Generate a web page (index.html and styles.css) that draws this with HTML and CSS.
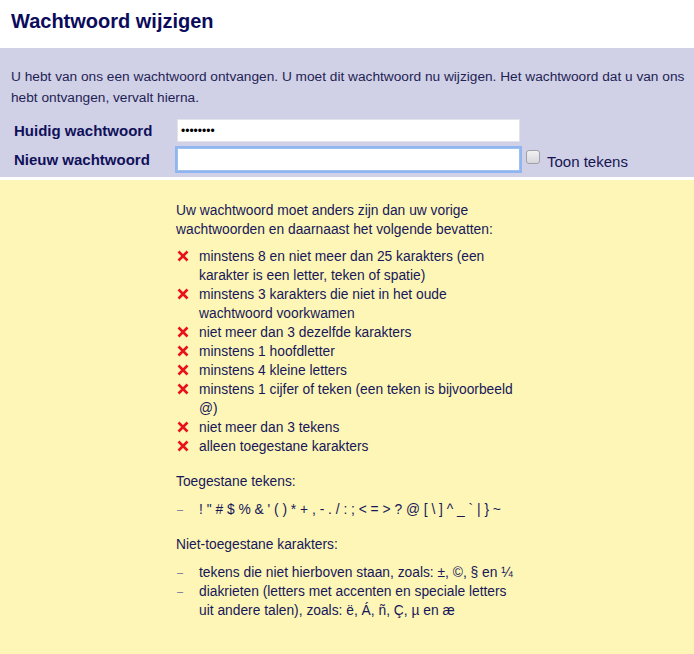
FILE: index.html
```html
<!DOCTYPE html>
<html lang="nl">
<head>
<meta charset="utf-8">
<title>Wachtwoord wijzigen</title>
<link rel="stylesheet" href="styles.css">
</head>
<body>
<header class="page-head">
  <h1 class="title">Wachtwoord wijzigen</h1>
</header>
<section class="band">
  <p class="intro">U hebt van ons een wachtwoord ontvangen. U moet dit wachtwoord nu wijzigen. Het wachtwoord dat u van ons hebt ontvangen, vervalt hierna.</p>
  <div class="form">
    <label class="label" for="cur">Huidig wachtwoord</label>
    <input class="field" id="cur" type="password" value="12345678">
    <span></span>
    <label class="label" for="new">Nieuw wachtwoord</label>
    <input class="field focus" id="new" type="password">
    <span class="show"><span class="check"></span>Toon tekens</span>
  </div>
</section>
<section class="rules">
  <div class="rules-inner">
    <p class="lead">Uw wachtwoord moet anders zijn dan uw vorige wachtwoorden en daarnaast het volgende bevatten:</p>
    <ul class="list">
      <li class="item"><svg class="x" viewBox="0 0 12 12"><path d="M1.5 1.5 L10.5 10.5 M10.5 1.5 L1.5 10.5"/></svg>minstens 8 en niet meer dan 25 karakters (een karakter is een letter, teken of spatie)</li>
      <li class="item"><svg class="x" viewBox="0 0 12 12"><path d="M1.5 1.5 L10.5 10.5 M10.5 1.5 L1.5 10.5"/></svg>minstens 3 karakters die niet in het oude wachtwoord voorkwamen</li>
      <li class="item"><svg class="x" viewBox="0 0 12 12"><path d="M1.5 1.5 L10.5 10.5 M10.5 1.5 L1.5 10.5"/></svg>niet meer dan 3 dezelfde karakters</li>
      <li class="item"><svg class="x" viewBox="0 0 12 12"><path d="M1.5 1.5 L10.5 10.5 M10.5 1.5 L1.5 10.5"/></svg>minstens 1 hoofdletter</li>
      <li class="item"><svg class="x" viewBox="0 0 12 12"><path d="M1.5 1.5 L10.5 10.5 M10.5 1.5 L1.5 10.5"/></svg>minstens 4 kleine letters</li>
      <li class="item"><svg class="x" viewBox="0 0 12 12"><path d="M1.5 1.5 L10.5 10.5 M10.5 1.5 L1.5 10.5"/></svg>minstens 1 cijfer of teken (een teken is bijvoorbeeld @)</li>
      <li class="item"><svg class="x" viewBox="0 0 12 12"><path d="M1.5 1.5 L10.5 10.5 M10.5 1.5 L1.5 10.5"/></svg>niet meer dan 3 tekens</li>
      <li class="item"><svg class="x" viewBox="0 0 12 12"><path d="M1.5 1.5 L10.5 10.5 M10.5 1.5 L1.5 10.5"/></svg>alleen toegestane karakters</li>
    </ul>
    <p class="sub">Toegestane tekens:</p>
    <ul class="list dashes">
      <li class="item"><span class="dash">–</span>! " # $ % &amp; ' ( ) * + , - . / : ; &lt; = &gt; ? @ [ \ ] ^ _ ` | } ~</li>
    </ul>
    <p class="sub">Niet-toegestane karakters:</p>
    <ul class="list dashes">
      <li class="item"><span class="dash">–</span>tekens die niet hierboven staan, zoals: ±, ©, § en ¼</li>
      <li class="item"><span class="dash">–</span>diakrieten (letters met accenten en speciale letters uit andere talen), zoals: ë, Á, ñ, Ç, µ en æ</li>
    </ul>
  </div>
</section>
</body>
</html>
```

FILE: styles.css
```css
html, body {
  margin: 0;
  padding: 0;
  background: #fdf6b6;
}
body {
  font-family: "Liberation Sans", Arial, sans-serif;
  font-size: 13.8px;
  color: #17175a;
  min-height: 654px;
}
.page-head {
  background: #ffffff;
  height: 48px;
  display: flex;
  align-items: center;
  padding: 0 11px;
}
.title {
  margin: 0;
  font-size: 20px;
  font-weight: bold;
  color: #0b0b5c;
  position: relative;
  top: -3px;
}
.band {
  background: #d0d0e6;
  padding: 18px 0 6px 11px;
  border-bottom: 3px solid #ffffff;
}
.intro {
  margin: 0 0 11px;
  line-height: 21px;
  color: #1f1f55;
  font-size: 13.7px;
}
.form {
  display: grid;
  grid-template-columns: 166px 343px auto;
  row-gap: 6px;
  align-items: center;
}
.label {
  font-weight: bold;
  font-size: 15px;
  color: #10105a;
  padding-left: 3px;
}
.field {
  box-sizing: border-box;
  height: 23px;
  width: 343px;
  margin: 0;
  border: 1px solid #e2e2ea;
  background: #ffffff;
  font-size: 12px;
  padding: 0 3px;
  outline: none;
}
.field.focus {
  border: 1px solid #9ec0ee;
  box-shadow: 0 0 0 2px #8fb6f0;
}
.show {
  display: flex;
  align-items: center;
  gap: 7px;
  padding-left: 6px;
  font-size: 15px;
  color: #151550;
  position: relative;
  top: 2px;
}
.check {
  width: 12px;
  height: 12px;
  border: 1px solid #a0a0a8;
  border-radius: 3px;
  background: linear-gradient(#f2f2f2, #d6d6dc);
  position: relative;
  top: -5px;
}
.rules {
  padding: 21px 0 20px 176px;
}
.rules-inner {
  width: 346px;
}
.lead {
  margin: 0 0 8px;
  line-height: 19px;
}
.list {
  list-style: none;
  margin: 0 0 16px;
  padding: 0;
}
.item {
  position: relative;
  padding-left: 23px;
  line-height: 19px;
}
.x {
  position: absolute;
  left: 1px;
  top: 3px;
  width: 12px;
  height: 12px;
  stroke: #e8121c;
  stroke-width: 2.6;
  fill: none;
}
.sub {
  margin: 0 0 9px;
  line-height: 19px;
}
.dash {
  position: absolute;
  left: 1px;
  top: 0;
  color: #6a6a9a;
  font-size: 11px;
}
```
